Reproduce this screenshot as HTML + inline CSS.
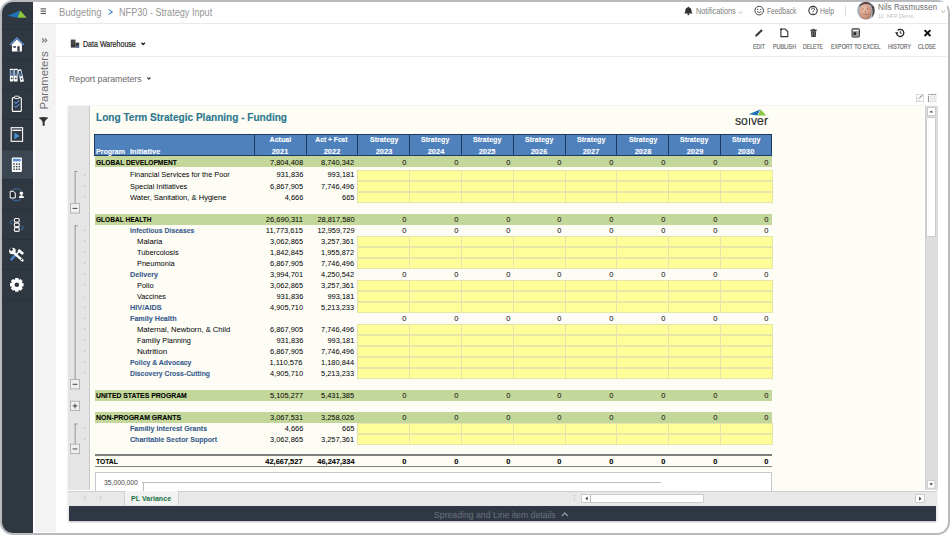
<!DOCTYPE html>
<html><head><meta charset="utf-8"><style>
html,body{margin:0;padding:0;width:950px;height:535px;overflow:hidden;background:#fff}
body{position:relative;font-family:"Liberation Sans", sans-serif}
span{position:absolute;white-space:nowrap;line-height:1;display:block}
</style></head><body>
<div style="position:absolute;left:0;top:0;width:950px;height:535px;box-sizing:border-box;border:2.4px solid #b9babd;border-radius:13px;overflow:hidden;background:#fff">
</div>
<div style="position:absolute;left:2.30px;top:2.20px;width:30.40px;height:530.40px;background:#2f3741;border-radius:11px 0 0 11px"></div>
<div style="position:absolute;left:2.30px;top:149.30px;width:30.40px;height:29.80px;background:#3c4652;"></div>
<div style="position:absolute;left:2.30px;top:29.30px;width:30.40px;height:0.70px;background:#2a313b;"></div>
<div style="position:absolute;left:2.30px;top:59.30px;width:30.40px;height:0.70px;background:#2a313b;"></div>
<div style="position:absolute;left:2.30px;top:89.30px;width:30.40px;height:0.70px;background:#2a313b;"></div>
<div style="position:absolute;left:2.30px;top:119.30px;width:30.40px;height:0.70px;background:#2a313b;"></div>
<div style="position:absolute;left:2.30px;top:149.30px;width:30.40px;height:0.70px;background:#2a313b;"></div>
<div style="position:absolute;left:2.30px;top:179.30px;width:30.40px;height:0.70px;background:#2a313b;"></div>
<div style="position:absolute;left:2.30px;top:209.30px;width:30.40px;height:0.70px;background:#2a313b;"></div>
<div style="position:absolute;left:2.30px;top:239.30px;width:30.40px;height:0.70px;background:#2a313b;"></div>
<div style="position:absolute;left:2.30px;top:269.30px;width:30.40px;height:0.70px;background:#2a313b;"></div>
<div style="position:absolute;left:2.30px;top:299.30px;width:30.40px;height:0.70px;background:#2a313b;"></div>
<div style="position:absolute;left:32.70px;top:2.20px;width:914.30px;height:20.80px;background:#ffffff;"></div>
<div style="position:absolute;left:32.70px;top:22.90px;width:914.30px;height:1.00px;background:#e8e8e8;"></div>
<div style="position:absolute;left:34.60px;top:23.90px;width:21.40px;height:508.00px;background:#f3f3f3;"></div>
<div style="position:absolute;left:56.00px;top:56.20px;width:891.00px;height:0.90px;background:#ededed;"></div>
<div style="position:absolute;left:68.3px;top:106.3px;width:869.2px;height:414.9px;box-shadow:0 0 2px rgba(0,0,0,0.12)"></div>
<div style="position:absolute;left:68.30px;top:106.30px;width:20.70px;height:384.20px;background:#e5e5e5;"></div>
<div style="position:absolute;left:89.00px;top:106.30px;width:1.20px;height:384.20px;background:#c9c9c9;"></div>
<div style="position:absolute;left:90.20px;top:106.30px;width:834.30px;height:384.20px;background:#fdfdf6;"></div>
<div style="position:absolute;left:924.50px;top:106.30px;width:13.00px;height:384.20px;background:#dddddd;"></div>
<div style="position:absolute;left:924.50px;top:106.30px;width:0.80px;height:384.20px;background:#cfcfcf;"></div>
<div style="position:absolute;left:927.50px;top:107.50px;width:7.40px;height:7.20px;background:#ffffff;box-shadow:0 0 0 0.6px #bdbdbd"></div>
<div style="position:absolute;left:927.30px;top:118.40px;width:7.60px;height:118.00px;background:#ffffff;box-shadow:0 0 0 0.6px #bdbdbd"></div>
<div style="position:absolute;left:68.30px;top:490.50px;width:869.20px;height:15.00px;background:#e8e8e8;"></div>
<div style="position:absolute;left:68.30px;top:490.50px;width:869.20px;height:0.80px;background:#d0d0d0;"></div>
<div style="position:absolute;left:124.50px;top:490.90px;width:53.70px;height:14.20px;background:#f3f3f3;box-shadow:0.6px 0 0 #c8c8c8,-0.6px 0 0 #c8c8c8"></div>
<div style="position:absolute;left:582.40px;top:494.80px;width:121.00px;height:7.40px;background:#ffffff;box-shadow:0 0 0 0.6px #b8b8b8"></div>
<div style="position:absolute;left:590.30px;top:494.80px;width:0.60px;height:7.40px;background:#b8b8b8;"></div>
<div style="position:absolute;left:916.00px;top:494.80px;width:8.40px;height:7.60px;background:#ffffff;box-shadow:0 0 0 0.6px #b8b8b8"></div>
<div style="position:absolute;left:68.90px;top:505.60px;width:867.60px;height:15.60px;background:#2f3744;box-shadow:0 1px 2px rgba(0,0,0,0.25)"></div>
<div style="position:absolute;left:94.90px;top:133.90px;width:677.10px;height:22.30px;background:#4f81bd;"></div>
<div style="position:absolute;left:94.4px;top:133.7px;width:677.9px;height:22.6px;box-sizing:border-box;border:1.1px solid #1f3a60"></div>
<div style="position:absolute;left:253.70px;top:133.90px;width:1.10px;height:22.30px;background:#1f3a60;"></div>
<div style="position:absolute;left:305.50px;top:133.90px;width:1.10px;height:22.30px;background:#1f3a60;"></div>
<div style="position:absolute;left:357.30px;top:133.90px;width:1.10px;height:22.30px;background:#1f3a60;"></div>
<div style="position:absolute;left:409.10px;top:133.90px;width:1.10px;height:22.30px;background:#1f3a60;"></div>
<div style="position:absolute;left:460.90px;top:133.90px;width:1.10px;height:22.30px;background:#1f3a60;"></div>
<div style="position:absolute;left:512.70px;top:133.90px;width:1.10px;height:22.30px;background:#1f3a60;"></div>
<div style="position:absolute;left:564.50px;top:133.90px;width:1.10px;height:22.30px;background:#1f3a60;"></div>
<div style="position:absolute;left:616.30px;top:133.90px;width:1.10px;height:22.30px;background:#1f3a60;"></div>
<div style="position:absolute;left:668.10px;top:133.90px;width:1.10px;height:22.30px;background:#1f3a60;"></div>
<div style="position:absolute;left:719.90px;top:133.90px;width:1.10px;height:22.30px;background:#1f3a60;"></div>
<div style="position:absolute;left:94.90px;top:156.20px;width:677.10px;height:10.70px;background:#c4d79b;"></div>
<div style="position:absolute;left:357.80px;top:169.60px;width:414.20px;height:11.00px;background:#ffff99;"></div>
<div style="position:absolute;left:357.80px;top:169.60px;width:414.20px;height:0.70px;background:#e6e6a8;"></div>
<div style="position:absolute;left:357.80px;top:180.25px;width:414.20px;height:0.70px;background:#e6e6a8;"></div>
<div style="position:absolute;left:357.45px;top:169.60px;width:0.70px;height:11.00px;background:#e3e3aa;"></div>
<div style="position:absolute;left:409.25px;top:169.60px;width:0.70px;height:11.00px;background:#e3e3aa;"></div>
<div style="position:absolute;left:461.05px;top:169.60px;width:0.70px;height:11.00px;background:#e3e3aa;"></div>
<div style="position:absolute;left:512.85px;top:169.60px;width:0.70px;height:11.00px;background:#e3e3aa;"></div>
<div style="position:absolute;left:564.65px;top:169.60px;width:0.70px;height:11.00px;background:#e3e3aa;"></div>
<div style="position:absolute;left:616.45px;top:169.60px;width:0.70px;height:11.00px;background:#e3e3aa;"></div>
<div style="position:absolute;left:668.25px;top:169.60px;width:0.70px;height:11.00px;background:#e3e3aa;"></div>
<div style="position:absolute;left:720.05px;top:169.60px;width:0.70px;height:11.00px;background:#e3e3aa;"></div>
<div style="position:absolute;left:771.65px;top:169.60px;width:0.70px;height:11.00px;background:#e3e3aa;"></div>
<div style="position:absolute;left:357.80px;top:180.60px;width:414.20px;height:11.00px;background:#ffff99;"></div>
<div style="position:absolute;left:357.80px;top:180.60px;width:414.20px;height:0.70px;background:#e6e6a8;"></div>
<div style="position:absolute;left:357.80px;top:191.25px;width:414.20px;height:0.70px;background:#e6e6a8;"></div>
<div style="position:absolute;left:357.45px;top:180.60px;width:0.70px;height:11.00px;background:#e3e3aa;"></div>
<div style="position:absolute;left:409.25px;top:180.60px;width:0.70px;height:11.00px;background:#e3e3aa;"></div>
<div style="position:absolute;left:461.05px;top:180.60px;width:0.70px;height:11.00px;background:#e3e3aa;"></div>
<div style="position:absolute;left:512.85px;top:180.60px;width:0.70px;height:11.00px;background:#e3e3aa;"></div>
<div style="position:absolute;left:564.65px;top:180.60px;width:0.70px;height:11.00px;background:#e3e3aa;"></div>
<div style="position:absolute;left:616.45px;top:180.60px;width:0.70px;height:11.00px;background:#e3e3aa;"></div>
<div style="position:absolute;left:668.25px;top:180.60px;width:0.70px;height:11.00px;background:#e3e3aa;"></div>
<div style="position:absolute;left:720.05px;top:180.60px;width:0.70px;height:11.00px;background:#e3e3aa;"></div>
<div style="position:absolute;left:771.65px;top:180.60px;width:0.70px;height:11.00px;background:#e3e3aa;"></div>
<div style="position:absolute;left:357.80px;top:191.60px;width:414.20px;height:11.00px;background:#ffff99;"></div>
<div style="position:absolute;left:357.80px;top:191.60px;width:414.20px;height:0.70px;background:#e6e6a8;"></div>
<div style="position:absolute;left:357.80px;top:202.25px;width:414.20px;height:0.70px;background:#e6e6a8;"></div>
<div style="position:absolute;left:357.45px;top:191.60px;width:0.70px;height:11.00px;background:#e3e3aa;"></div>
<div style="position:absolute;left:409.25px;top:191.60px;width:0.70px;height:11.00px;background:#e3e3aa;"></div>
<div style="position:absolute;left:461.05px;top:191.60px;width:0.70px;height:11.00px;background:#e3e3aa;"></div>
<div style="position:absolute;left:512.85px;top:191.60px;width:0.70px;height:11.00px;background:#e3e3aa;"></div>
<div style="position:absolute;left:564.65px;top:191.60px;width:0.70px;height:11.00px;background:#e3e3aa;"></div>
<div style="position:absolute;left:616.45px;top:191.60px;width:0.70px;height:11.00px;background:#e3e3aa;"></div>
<div style="position:absolute;left:668.25px;top:191.60px;width:0.70px;height:11.00px;background:#e3e3aa;"></div>
<div style="position:absolute;left:720.05px;top:191.60px;width:0.70px;height:11.00px;background:#e3e3aa;"></div>
<div style="position:absolute;left:771.65px;top:191.60px;width:0.70px;height:11.00px;background:#e3e3aa;"></div>
<div style="position:absolute;left:94.90px;top:213.60px;width:677.10px;height:11.00px;background:#c4d79b;"></div>
<div style="position:absolute;left:357.80px;top:235.60px;width:414.20px;height:11.00px;background:#ffff99;"></div>
<div style="position:absolute;left:357.80px;top:235.60px;width:414.20px;height:0.70px;background:#e6e6a8;"></div>
<div style="position:absolute;left:357.80px;top:246.25px;width:414.20px;height:0.70px;background:#e6e6a8;"></div>
<div style="position:absolute;left:357.45px;top:235.60px;width:0.70px;height:11.00px;background:#e3e3aa;"></div>
<div style="position:absolute;left:409.25px;top:235.60px;width:0.70px;height:11.00px;background:#e3e3aa;"></div>
<div style="position:absolute;left:461.05px;top:235.60px;width:0.70px;height:11.00px;background:#e3e3aa;"></div>
<div style="position:absolute;left:512.85px;top:235.60px;width:0.70px;height:11.00px;background:#e3e3aa;"></div>
<div style="position:absolute;left:564.65px;top:235.60px;width:0.70px;height:11.00px;background:#e3e3aa;"></div>
<div style="position:absolute;left:616.45px;top:235.60px;width:0.70px;height:11.00px;background:#e3e3aa;"></div>
<div style="position:absolute;left:668.25px;top:235.60px;width:0.70px;height:11.00px;background:#e3e3aa;"></div>
<div style="position:absolute;left:720.05px;top:235.60px;width:0.70px;height:11.00px;background:#e3e3aa;"></div>
<div style="position:absolute;left:771.65px;top:235.60px;width:0.70px;height:11.00px;background:#e3e3aa;"></div>
<div style="position:absolute;left:357.80px;top:246.60px;width:414.20px;height:11.00px;background:#ffff99;"></div>
<div style="position:absolute;left:357.80px;top:246.60px;width:414.20px;height:0.70px;background:#e6e6a8;"></div>
<div style="position:absolute;left:357.80px;top:257.25px;width:414.20px;height:0.70px;background:#e6e6a8;"></div>
<div style="position:absolute;left:357.45px;top:246.60px;width:0.70px;height:11.00px;background:#e3e3aa;"></div>
<div style="position:absolute;left:409.25px;top:246.60px;width:0.70px;height:11.00px;background:#e3e3aa;"></div>
<div style="position:absolute;left:461.05px;top:246.60px;width:0.70px;height:11.00px;background:#e3e3aa;"></div>
<div style="position:absolute;left:512.85px;top:246.60px;width:0.70px;height:11.00px;background:#e3e3aa;"></div>
<div style="position:absolute;left:564.65px;top:246.60px;width:0.70px;height:11.00px;background:#e3e3aa;"></div>
<div style="position:absolute;left:616.45px;top:246.60px;width:0.70px;height:11.00px;background:#e3e3aa;"></div>
<div style="position:absolute;left:668.25px;top:246.60px;width:0.70px;height:11.00px;background:#e3e3aa;"></div>
<div style="position:absolute;left:720.05px;top:246.60px;width:0.70px;height:11.00px;background:#e3e3aa;"></div>
<div style="position:absolute;left:771.65px;top:246.60px;width:0.70px;height:11.00px;background:#e3e3aa;"></div>
<div style="position:absolute;left:357.80px;top:257.60px;width:414.20px;height:11.00px;background:#ffff99;"></div>
<div style="position:absolute;left:357.80px;top:257.60px;width:414.20px;height:0.70px;background:#e6e6a8;"></div>
<div style="position:absolute;left:357.80px;top:268.25px;width:414.20px;height:0.70px;background:#e6e6a8;"></div>
<div style="position:absolute;left:357.45px;top:257.60px;width:0.70px;height:11.00px;background:#e3e3aa;"></div>
<div style="position:absolute;left:409.25px;top:257.60px;width:0.70px;height:11.00px;background:#e3e3aa;"></div>
<div style="position:absolute;left:461.05px;top:257.60px;width:0.70px;height:11.00px;background:#e3e3aa;"></div>
<div style="position:absolute;left:512.85px;top:257.60px;width:0.70px;height:11.00px;background:#e3e3aa;"></div>
<div style="position:absolute;left:564.65px;top:257.60px;width:0.70px;height:11.00px;background:#e3e3aa;"></div>
<div style="position:absolute;left:616.45px;top:257.60px;width:0.70px;height:11.00px;background:#e3e3aa;"></div>
<div style="position:absolute;left:668.25px;top:257.60px;width:0.70px;height:11.00px;background:#e3e3aa;"></div>
<div style="position:absolute;left:720.05px;top:257.60px;width:0.70px;height:11.00px;background:#e3e3aa;"></div>
<div style="position:absolute;left:771.65px;top:257.60px;width:0.70px;height:11.00px;background:#e3e3aa;"></div>
<div style="position:absolute;left:357.80px;top:279.60px;width:414.20px;height:11.00px;background:#ffff99;"></div>
<div style="position:absolute;left:357.80px;top:279.60px;width:414.20px;height:0.70px;background:#e6e6a8;"></div>
<div style="position:absolute;left:357.80px;top:290.25px;width:414.20px;height:0.70px;background:#e6e6a8;"></div>
<div style="position:absolute;left:357.45px;top:279.60px;width:0.70px;height:11.00px;background:#e3e3aa;"></div>
<div style="position:absolute;left:409.25px;top:279.60px;width:0.70px;height:11.00px;background:#e3e3aa;"></div>
<div style="position:absolute;left:461.05px;top:279.60px;width:0.70px;height:11.00px;background:#e3e3aa;"></div>
<div style="position:absolute;left:512.85px;top:279.60px;width:0.70px;height:11.00px;background:#e3e3aa;"></div>
<div style="position:absolute;left:564.65px;top:279.60px;width:0.70px;height:11.00px;background:#e3e3aa;"></div>
<div style="position:absolute;left:616.45px;top:279.60px;width:0.70px;height:11.00px;background:#e3e3aa;"></div>
<div style="position:absolute;left:668.25px;top:279.60px;width:0.70px;height:11.00px;background:#e3e3aa;"></div>
<div style="position:absolute;left:720.05px;top:279.60px;width:0.70px;height:11.00px;background:#e3e3aa;"></div>
<div style="position:absolute;left:771.65px;top:279.60px;width:0.70px;height:11.00px;background:#e3e3aa;"></div>
<div style="position:absolute;left:357.80px;top:290.60px;width:414.20px;height:11.00px;background:#ffff99;"></div>
<div style="position:absolute;left:357.80px;top:290.60px;width:414.20px;height:0.70px;background:#e6e6a8;"></div>
<div style="position:absolute;left:357.80px;top:301.25px;width:414.20px;height:0.70px;background:#e6e6a8;"></div>
<div style="position:absolute;left:357.45px;top:290.60px;width:0.70px;height:11.00px;background:#e3e3aa;"></div>
<div style="position:absolute;left:409.25px;top:290.60px;width:0.70px;height:11.00px;background:#e3e3aa;"></div>
<div style="position:absolute;left:461.05px;top:290.60px;width:0.70px;height:11.00px;background:#e3e3aa;"></div>
<div style="position:absolute;left:512.85px;top:290.60px;width:0.70px;height:11.00px;background:#e3e3aa;"></div>
<div style="position:absolute;left:564.65px;top:290.60px;width:0.70px;height:11.00px;background:#e3e3aa;"></div>
<div style="position:absolute;left:616.45px;top:290.60px;width:0.70px;height:11.00px;background:#e3e3aa;"></div>
<div style="position:absolute;left:668.25px;top:290.60px;width:0.70px;height:11.00px;background:#e3e3aa;"></div>
<div style="position:absolute;left:720.05px;top:290.60px;width:0.70px;height:11.00px;background:#e3e3aa;"></div>
<div style="position:absolute;left:771.65px;top:290.60px;width:0.70px;height:11.00px;background:#e3e3aa;"></div>
<div style="position:absolute;left:357.80px;top:301.60px;width:414.20px;height:11.00px;background:#ffff99;"></div>
<div style="position:absolute;left:357.80px;top:301.60px;width:414.20px;height:0.70px;background:#e6e6a8;"></div>
<div style="position:absolute;left:357.80px;top:312.25px;width:414.20px;height:0.70px;background:#e6e6a8;"></div>
<div style="position:absolute;left:357.45px;top:301.60px;width:0.70px;height:11.00px;background:#e3e3aa;"></div>
<div style="position:absolute;left:409.25px;top:301.60px;width:0.70px;height:11.00px;background:#e3e3aa;"></div>
<div style="position:absolute;left:461.05px;top:301.60px;width:0.70px;height:11.00px;background:#e3e3aa;"></div>
<div style="position:absolute;left:512.85px;top:301.60px;width:0.70px;height:11.00px;background:#e3e3aa;"></div>
<div style="position:absolute;left:564.65px;top:301.60px;width:0.70px;height:11.00px;background:#e3e3aa;"></div>
<div style="position:absolute;left:616.45px;top:301.60px;width:0.70px;height:11.00px;background:#e3e3aa;"></div>
<div style="position:absolute;left:668.25px;top:301.60px;width:0.70px;height:11.00px;background:#e3e3aa;"></div>
<div style="position:absolute;left:720.05px;top:301.60px;width:0.70px;height:11.00px;background:#e3e3aa;"></div>
<div style="position:absolute;left:771.65px;top:301.60px;width:0.70px;height:11.00px;background:#e3e3aa;"></div>
<div style="position:absolute;left:357.80px;top:323.60px;width:414.20px;height:11.00px;background:#ffff99;"></div>
<div style="position:absolute;left:357.80px;top:323.60px;width:414.20px;height:0.70px;background:#e6e6a8;"></div>
<div style="position:absolute;left:357.80px;top:334.25px;width:414.20px;height:0.70px;background:#e6e6a8;"></div>
<div style="position:absolute;left:357.45px;top:323.60px;width:0.70px;height:11.00px;background:#e3e3aa;"></div>
<div style="position:absolute;left:409.25px;top:323.60px;width:0.70px;height:11.00px;background:#e3e3aa;"></div>
<div style="position:absolute;left:461.05px;top:323.60px;width:0.70px;height:11.00px;background:#e3e3aa;"></div>
<div style="position:absolute;left:512.85px;top:323.60px;width:0.70px;height:11.00px;background:#e3e3aa;"></div>
<div style="position:absolute;left:564.65px;top:323.60px;width:0.70px;height:11.00px;background:#e3e3aa;"></div>
<div style="position:absolute;left:616.45px;top:323.60px;width:0.70px;height:11.00px;background:#e3e3aa;"></div>
<div style="position:absolute;left:668.25px;top:323.60px;width:0.70px;height:11.00px;background:#e3e3aa;"></div>
<div style="position:absolute;left:720.05px;top:323.60px;width:0.70px;height:11.00px;background:#e3e3aa;"></div>
<div style="position:absolute;left:771.65px;top:323.60px;width:0.70px;height:11.00px;background:#e3e3aa;"></div>
<div style="position:absolute;left:357.80px;top:334.60px;width:414.20px;height:11.00px;background:#ffff99;"></div>
<div style="position:absolute;left:357.80px;top:334.60px;width:414.20px;height:0.70px;background:#e6e6a8;"></div>
<div style="position:absolute;left:357.80px;top:345.25px;width:414.20px;height:0.70px;background:#e6e6a8;"></div>
<div style="position:absolute;left:357.45px;top:334.60px;width:0.70px;height:11.00px;background:#e3e3aa;"></div>
<div style="position:absolute;left:409.25px;top:334.60px;width:0.70px;height:11.00px;background:#e3e3aa;"></div>
<div style="position:absolute;left:461.05px;top:334.60px;width:0.70px;height:11.00px;background:#e3e3aa;"></div>
<div style="position:absolute;left:512.85px;top:334.60px;width:0.70px;height:11.00px;background:#e3e3aa;"></div>
<div style="position:absolute;left:564.65px;top:334.60px;width:0.70px;height:11.00px;background:#e3e3aa;"></div>
<div style="position:absolute;left:616.45px;top:334.60px;width:0.70px;height:11.00px;background:#e3e3aa;"></div>
<div style="position:absolute;left:668.25px;top:334.60px;width:0.70px;height:11.00px;background:#e3e3aa;"></div>
<div style="position:absolute;left:720.05px;top:334.60px;width:0.70px;height:11.00px;background:#e3e3aa;"></div>
<div style="position:absolute;left:771.65px;top:334.60px;width:0.70px;height:11.00px;background:#e3e3aa;"></div>
<div style="position:absolute;left:357.80px;top:345.60px;width:414.20px;height:11.00px;background:#ffff99;"></div>
<div style="position:absolute;left:357.80px;top:345.60px;width:414.20px;height:0.70px;background:#e6e6a8;"></div>
<div style="position:absolute;left:357.80px;top:356.25px;width:414.20px;height:0.70px;background:#e6e6a8;"></div>
<div style="position:absolute;left:357.45px;top:345.60px;width:0.70px;height:11.00px;background:#e3e3aa;"></div>
<div style="position:absolute;left:409.25px;top:345.60px;width:0.70px;height:11.00px;background:#e3e3aa;"></div>
<div style="position:absolute;left:461.05px;top:345.60px;width:0.70px;height:11.00px;background:#e3e3aa;"></div>
<div style="position:absolute;left:512.85px;top:345.60px;width:0.70px;height:11.00px;background:#e3e3aa;"></div>
<div style="position:absolute;left:564.65px;top:345.60px;width:0.70px;height:11.00px;background:#e3e3aa;"></div>
<div style="position:absolute;left:616.45px;top:345.60px;width:0.70px;height:11.00px;background:#e3e3aa;"></div>
<div style="position:absolute;left:668.25px;top:345.60px;width:0.70px;height:11.00px;background:#e3e3aa;"></div>
<div style="position:absolute;left:720.05px;top:345.60px;width:0.70px;height:11.00px;background:#e3e3aa;"></div>
<div style="position:absolute;left:771.65px;top:345.60px;width:0.70px;height:11.00px;background:#e3e3aa;"></div>
<div style="position:absolute;left:357.80px;top:356.60px;width:414.20px;height:11.00px;background:#ffff99;"></div>
<div style="position:absolute;left:357.80px;top:356.60px;width:414.20px;height:0.70px;background:#e6e6a8;"></div>
<div style="position:absolute;left:357.80px;top:367.25px;width:414.20px;height:0.70px;background:#e6e6a8;"></div>
<div style="position:absolute;left:357.45px;top:356.60px;width:0.70px;height:11.00px;background:#e3e3aa;"></div>
<div style="position:absolute;left:409.25px;top:356.60px;width:0.70px;height:11.00px;background:#e3e3aa;"></div>
<div style="position:absolute;left:461.05px;top:356.60px;width:0.70px;height:11.00px;background:#e3e3aa;"></div>
<div style="position:absolute;left:512.85px;top:356.60px;width:0.70px;height:11.00px;background:#e3e3aa;"></div>
<div style="position:absolute;left:564.65px;top:356.60px;width:0.70px;height:11.00px;background:#e3e3aa;"></div>
<div style="position:absolute;left:616.45px;top:356.60px;width:0.70px;height:11.00px;background:#e3e3aa;"></div>
<div style="position:absolute;left:668.25px;top:356.60px;width:0.70px;height:11.00px;background:#e3e3aa;"></div>
<div style="position:absolute;left:720.05px;top:356.60px;width:0.70px;height:11.00px;background:#e3e3aa;"></div>
<div style="position:absolute;left:771.65px;top:356.60px;width:0.70px;height:11.00px;background:#e3e3aa;"></div>
<div style="position:absolute;left:357.80px;top:367.60px;width:414.20px;height:11.00px;background:#ffff99;"></div>
<div style="position:absolute;left:357.80px;top:367.60px;width:414.20px;height:0.70px;background:#e6e6a8;"></div>
<div style="position:absolute;left:357.80px;top:378.25px;width:414.20px;height:0.70px;background:#e6e6a8;"></div>
<div style="position:absolute;left:357.45px;top:367.60px;width:0.70px;height:11.00px;background:#e3e3aa;"></div>
<div style="position:absolute;left:409.25px;top:367.60px;width:0.70px;height:11.00px;background:#e3e3aa;"></div>
<div style="position:absolute;left:461.05px;top:367.60px;width:0.70px;height:11.00px;background:#e3e3aa;"></div>
<div style="position:absolute;left:512.85px;top:367.60px;width:0.70px;height:11.00px;background:#e3e3aa;"></div>
<div style="position:absolute;left:564.65px;top:367.60px;width:0.70px;height:11.00px;background:#e3e3aa;"></div>
<div style="position:absolute;left:616.45px;top:367.60px;width:0.70px;height:11.00px;background:#e3e3aa;"></div>
<div style="position:absolute;left:668.25px;top:367.60px;width:0.70px;height:11.00px;background:#e3e3aa;"></div>
<div style="position:absolute;left:720.05px;top:367.60px;width:0.70px;height:11.00px;background:#e3e3aa;"></div>
<div style="position:absolute;left:771.65px;top:367.60px;width:0.70px;height:11.00px;background:#e3e3aa;"></div>
<div style="position:absolute;left:94.90px;top:389.60px;width:677.10px;height:11.00px;background:#c4d79b;"></div>
<div style="position:absolute;left:94.90px;top:411.60px;width:677.10px;height:11.00px;background:#c4d79b;"></div>
<div style="position:absolute;left:357.80px;top:422.60px;width:414.20px;height:11.00px;background:#ffff99;"></div>
<div style="position:absolute;left:357.80px;top:422.60px;width:414.20px;height:0.70px;background:#e6e6a8;"></div>
<div style="position:absolute;left:357.80px;top:433.25px;width:414.20px;height:0.70px;background:#e6e6a8;"></div>
<div style="position:absolute;left:357.45px;top:422.60px;width:0.70px;height:11.00px;background:#e3e3aa;"></div>
<div style="position:absolute;left:409.25px;top:422.60px;width:0.70px;height:11.00px;background:#e3e3aa;"></div>
<div style="position:absolute;left:461.05px;top:422.60px;width:0.70px;height:11.00px;background:#e3e3aa;"></div>
<div style="position:absolute;left:512.85px;top:422.60px;width:0.70px;height:11.00px;background:#e3e3aa;"></div>
<div style="position:absolute;left:564.65px;top:422.60px;width:0.70px;height:11.00px;background:#e3e3aa;"></div>
<div style="position:absolute;left:616.45px;top:422.60px;width:0.70px;height:11.00px;background:#e3e3aa;"></div>
<div style="position:absolute;left:668.25px;top:422.60px;width:0.70px;height:11.00px;background:#e3e3aa;"></div>
<div style="position:absolute;left:720.05px;top:422.60px;width:0.70px;height:11.00px;background:#e3e3aa;"></div>
<div style="position:absolute;left:771.65px;top:422.60px;width:0.70px;height:11.00px;background:#e3e3aa;"></div>
<div style="position:absolute;left:357.80px;top:433.60px;width:414.20px;height:11.00px;background:#ffff99;"></div>
<div style="position:absolute;left:357.80px;top:433.60px;width:414.20px;height:0.70px;background:#e6e6a8;"></div>
<div style="position:absolute;left:357.80px;top:444.25px;width:414.20px;height:0.70px;background:#e6e6a8;"></div>
<div style="position:absolute;left:357.45px;top:433.60px;width:0.70px;height:11.00px;background:#e3e3aa;"></div>
<div style="position:absolute;left:409.25px;top:433.60px;width:0.70px;height:11.00px;background:#e3e3aa;"></div>
<div style="position:absolute;left:461.05px;top:433.60px;width:0.70px;height:11.00px;background:#e3e3aa;"></div>
<div style="position:absolute;left:512.85px;top:433.60px;width:0.70px;height:11.00px;background:#e3e3aa;"></div>
<div style="position:absolute;left:564.65px;top:433.60px;width:0.70px;height:11.00px;background:#e3e3aa;"></div>
<div style="position:absolute;left:616.45px;top:433.60px;width:0.70px;height:11.00px;background:#e3e3aa;"></div>
<div style="position:absolute;left:668.25px;top:433.60px;width:0.70px;height:11.00px;background:#e3e3aa;"></div>
<div style="position:absolute;left:720.05px;top:433.60px;width:0.70px;height:11.00px;background:#e3e3aa;"></div>
<div style="position:absolute;left:771.65px;top:433.60px;width:0.70px;height:11.00px;background:#e3e3aa;"></div>
<div style="position:absolute;left:94.90px;top:454.40px;width:677.10px;height:1.40px;background:#7f7f7f;"></div>
<div style="position:absolute;left:94.90px;top:465.90px;width:677.10px;height:1.40px;background:#7f7f7f;"></div>
<div style="position:absolute;left:94.6px;top:472.2px;width:677.4px;height:30px;box-sizing:border-box;border:1px solid #c8c8c8;background:#fff"></div>
<div style="position:absolute;left:141.50px;top:482.20px;width:519.50px;height:0.80px;background:#bdbdbd;"></div>
<div style="position:absolute;left:143.40px;top:482.20px;width:0.80px;height:8.50px;background:#bdbdbd;"></div>
<div style="position:absolute;left:68.30px;top:490.50px;width:869.20px;height:15.00px;background:#e8e8e8;"></div>
<div style="position:absolute;left:68.30px;top:490.50px;width:869.20px;height:0.80px;background:#d0d0d0;"></div>
<div style="position:absolute;left:124.50px;top:490.90px;width:53.70px;height:14.60px;background:#f2f2f2;box-shadow:0.7px 0 0 #c8c8c8,-0.7px 0 0 #c8c8c8"></div>
<div style="position:absolute;left:582.40px;top:494.80px;width:121.00px;height:7.40px;background:#ffffff;box-shadow:0 0 0 0.6px #b8b8b8"></div>
<div style="position:absolute;left:590.30px;top:494.80px;width:0.60px;height:7.40px;background:#b8b8b8;"></div>
<div style="position:absolute;left:916.00px;top:494.80px;width:8.40px;height:7.60px;background:#ffffff;box-shadow:0 0 0 0.6px #b8b8b8"></div>
<div style="position:absolute;left:748.90px;top:117.90px;width:1.40px;height:6.90px;background:#2e2e2e;"></div>
<span style="left:95.80px;top:159.00px;font-size:8.1px;color:#000;font-weight:bold;transform:scaleX(0.8255);transform-origin:left 0;-webkit-text-stroke:0.1px #000;">GLOBAL DEVELOPMENT</span>
<span style="left:266.79px;top:159.00px;font-size:8.1px;color:#000;font-weight:normal;transform:scaleX(0.9160);transform-origin:right 0;">7,804,408</span>
<span style="left:318.39px;top:159.00px;font-size:8.1px;color:#000;font-weight:normal;transform:scaleX(0.9160);transform-origin:right 0;">8,740,342</span>
<span style="left:401.90px;top:159.00px;font-size:8.1px;color:#000;font-weight:normal;transform:scaleX(0.9177);transform-origin:right 0;">0</span>
<span style="left:453.70px;top:159.00px;font-size:8.1px;color:#000;font-weight:normal;transform:scaleX(0.9177);transform-origin:right 0;">0</span>
<span style="left:505.50px;top:159.00px;font-size:8.1px;color:#000;font-weight:normal;transform:scaleX(0.9177);transform-origin:right 0;">0</span>
<span style="left:557.30px;top:159.00px;font-size:8.1px;color:#000;font-weight:normal;transform:scaleX(0.9177);transform-origin:right 0;">0</span>
<span style="left:609.10px;top:159.00px;font-size:8.1px;color:#000;font-weight:normal;transform:scaleX(0.9177);transform-origin:right 0;">0</span>
<span style="left:660.90px;top:159.00px;font-size:8.1px;color:#000;font-weight:normal;transform:scaleX(0.9177);transform-origin:right 0;">0</span>
<span style="left:712.70px;top:159.00px;font-size:8.1px;color:#000;font-weight:normal;transform:scaleX(0.9177);transform-origin:right 0;">0</span>
<span style="left:764.30px;top:159.00px;font-size:8.1px;color:#000;font-weight:normal;transform:scaleX(0.9177);transform-origin:right 0;">0</span>
<span style="left:130.30px;top:171.00px;font-size:8.1px;color:#000;font-weight:normal;transform:scaleX(0.9052);transform-origin:left 0;">Financial Services for the Poor</span>
<span style="left:273.54px;top:171.00px;font-size:8.1px;color:#000;font-weight:normal;transform:scaleX(0.9166);transform-origin:right 0;">931,836</span>
<span style="left:325.14px;top:171.00px;font-size:8.1px;color:#000;font-weight:normal;transform:scaleX(0.9166);transform-origin:right 0;">993,181</span>
<span style="left:130.30px;top:183.00px;font-size:8.1px;color:#000;font-weight:normal;transform:scaleX(0.9155);transform-origin:left 0;">Special Initiatives</span>
<span style="left:266.79px;top:183.00px;font-size:8.1px;color:#000;font-weight:normal;transform:scaleX(0.9160);transform-origin:right 0;">6,867,905</span>
<span style="left:318.39px;top:183.00px;font-size:8.1px;color:#000;font-weight:normal;transform:scaleX(0.9160);transform-origin:right 0;">7,746,496</span>
<span style="left:130.30px;top:194.00px;font-size:8.1px;color:#000;font-weight:normal;transform:scaleX(0.9345);transform-origin:left 0;">Water, Sanitation, &amp; Hygiene</span>
<span style="left:282.55px;top:194.00px;font-size:8.1px;color:#000;font-weight:normal;transform:scaleX(0.9162);transform-origin:right 0;">4,666</span>
<span style="left:340.90px;top:194.00px;font-size:8.1px;color:#000;font-weight:normal;transform:scaleX(0.9177);transform-origin:right 0;">665</span>
<span style="left:95.80px;top:216.00px;font-size:8.1px;color:#000;font-weight:bold;transform:scaleX(0.8115);transform-origin:left 0;-webkit-text-stroke:0.1px #000;">GLOBAL HEALTH</span>
<span style="left:262.89px;top:216.00px;font-size:8.1px;color:#000;font-weight:normal;transform:scaleX(0.9300);transform-origin:right 0;">26,690,311</span>
<span style="left:313.89px;top:216.00px;font-size:8.1px;color:#000;font-weight:normal;transform:scaleX(0.9162);transform-origin:right 0;">28,817,580</span>
<span style="left:401.90px;top:216.00px;font-size:8.1px;color:#000;font-weight:normal;transform:scaleX(0.9177);transform-origin:right 0;">0</span>
<span style="left:453.70px;top:216.00px;font-size:8.1px;color:#000;font-weight:normal;transform:scaleX(0.9177);transform-origin:right 0;">0</span>
<span style="left:505.50px;top:216.00px;font-size:8.1px;color:#000;font-weight:normal;transform:scaleX(0.9177);transform-origin:right 0;">0</span>
<span style="left:557.30px;top:216.00px;font-size:8.1px;color:#000;font-weight:normal;transform:scaleX(0.9177);transform-origin:right 0;">0</span>
<span style="left:609.10px;top:216.00px;font-size:8.1px;color:#000;font-weight:normal;transform:scaleX(0.9177);transform-origin:right 0;">0</span>
<span style="left:660.90px;top:216.00px;font-size:8.1px;color:#000;font-weight:normal;transform:scaleX(0.9177);transform-origin:right 0;">0</span>
<span style="left:712.70px;top:216.00px;font-size:8.1px;color:#000;font-weight:normal;transform:scaleX(0.9177);transform-origin:right 0;">0</span>
<span style="left:764.30px;top:216.00px;font-size:8.1px;color:#000;font-weight:normal;transform:scaleX(0.9177);transform-origin:right 0;">0</span>
<span style="left:130.30px;top:227.00px;font-size:8.1px;color:#385b8c;font-weight:bold;transform:scaleX(0.8526);transform-origin:left 0;-webkit-text-stroke:0.1px #385b8c;">Infectious Diseases</span>
<span style="left:262.89px;top:227.00px;font-size:8.1px;color:#000;font-weight:normal;transform:scaleX(0.9300);transform-origin:right 0;">11,773,615</span>
<span style="left:313.89px;top:227.00px;font-size:8.1px;color:#000;font-weight:normal;transform:scaleX(0.9162);transform-origin:right 0;">12,959,729</span>
<span style="left:401.90px;top:227.00px;font-size:8.1px;color:#000;font-weight:normal;transform:scaleX(0.9177);transform-origin:right 0;">0</span>
<span style="left:453.70px;top:227.00px;font-size:8.1px;color:#000;font-weight:normal;transform:scaleX(0.9177);transform-origin:right 0;">0</span>
<span style="left:505.50px;top:227.00px;font-size:8.1px;color:#000;font-weight:normal;transform:scaleX(0.9177);transform-origin:right 0;">0</span>
<span style="left:557.30px;top:227.00px;font-size:8.1px;color:#000;font-weight:normal;transform:scaleX(0.9177);transform-origin:right 0;">0</span>
<span style="left:609.10px;top:227.00px;font-size:8.1px;color:#000;font-weight:normal;transform:scaleX(0.9177);transform-origin:right 0;">0</span>
<span style="left:660.90px;top:227.00px;font-size:8.1px;color:#000;font-weight:normal;transform:scaleX(0.9177);transform-origin:right 0;">0</span>
<span style="left:712.70px;top:227.00px;font-size:8.1px;color:#000;font-weight:normal;transform:scaleX(0.9177);transform-origin:right 0;">0</span>
<span style="left:764.30px;top:227.00px;font-size:8.1px;color:#000;font-weight:normal;transform:scaleX(0.9177);transform-origin:right 0;">0</span>
<span style="left:137.40px;top:238.00px;font-size:8.1px;color:#000;font-weight:normal;transform:scaleX(0.9519);transform-origin:left 0;">Malaria</span>
<span style="left:266.79px;top:238.00px;font-size:8.1px;color:#000;font-weight:normal;transform:scaleX(0.9160);transform-origin:right 0;">3,062,865</span>
<span style="left:318.39px;top:238.00px;font-size:8.1px;color:#000;font-weight:normal;transform:scaleX(0.9160);transform-origin:right 0;">3,257,361</span>
<span style="left:137.40px;top:249.00px;font-size:8.1px;color:#000;font-weight:normal;transform:scaleX(0.9124);transform-origin:left 0;">Tubercolosis</span>
<span style="left:266.79px;top:249.00px;font-size:8.1px;color:#000;font-weight:normal;transform:scaleX(0.9160);transform-origin:right 0;">1,842,845</span>
<span style="left:318.39px;top:249.00px;font-size:8.1px;color:#000;font-weight:normal;transform:scaleX(0.9160);transform-origin:right 0;">1,955,872</span>
<span style="left:137.40px;top:260.00px;font-size:8.1px;color:#000;font-weight:normal;transform:scaleX(0.9206);transform-origin:left 0;">Pneumonia</span>
<span style="left:266.79px;top:260.00px;font-size:8.1px;color:#000;font-weight:normal;transform:scaleX(0.9160);transform-origin:right 0;">6,867,905</span>
<span style="left:318.39px;top:260.00px;font-size:8.1px;color:#000;font-weight:normal;transform:scaleX(0.9160);transform-origin:right 0;">7,746,496</span>
<span style="left:130.30px;top:271.00px;font-size:8.1px;color:#385b8c;font-weight:bold;transform:scaleX(0.8910);transform-origin:left 0;-webkit-text-stroke:0.1px #385b8c;">Delivery</span>
<span style="left:266.79px;top:271.00px;font-size:8.1px;color:#000;font-weight:normal;transform:scaleX(0.9160);transform-origin:right 0;">3,994,701</span>
<span style="left:318.39px;top:271.00px;font-size:8.1px;color:#000;font-weight:normal;transform:scaleX(0.9160);transform-origin:right 0;">4,250,542</span>
<span style="left:401.90px;top:271.00px;font-size:8.1px;color:#000;font-weight:normal;transform:scaleX(0.9177);transform-origin:right 0;">0</span>
<span style="left:453.70px;top:271.00px;font-size:8.1px;color:#000;font-weight:normal;transform:scaleX(0.9177);transform-origin:right 0;">0</span>
<span style="left:505.50px;top:271.00px;font-size:8.1px;color:#000;font-weight:normal;transform:scaleX(0.9177);transform-origin:right 0;">0</span>
<span style="left:557.30px;top:271.00px;font-size:8.1px;color:#000;font-weight:normal;transform:scaleX(0.9177);transform-origin:right 0;">0</span>
<span style="left:609.10px;top:271.00px;font-size:8.1px;color:#000;font-weight:normal;transform:scaleX(0.9177);transform-origin:right 0;">0</span>
<span style="left:660.90px;top:271.00px;font-size:8.1px;color:#000;font-weight:normal;transform:scaleX(0.9177);transform-origin:right 0;">0</span>
<span style="left:712.70px;top:271.00px;font-size:8.1px;color:#000;font-weight:normal;transform:scaleX(0.9177);transform-origin:right 0;">0</span>
<span style="left:764.30px;top:271.00px;font-size:8.1px;color:#000;font-weight:normal;transform:scaleX(0.9177);transform-origin:right 0;">0</span>
<span style="left:137.40px;top:282.00px;font-size:8.1px;color:#000;font-weight:normal;transform:scaleX(0.9194);transform-origin:left 0;">Polio</span>
<span style="left:266.79px;top:282.00px;font-size:8.1px;color:#000;font-weight:normal;transform:scaleX(0.9160);transform-origin:right 0;">3,062,865</span>
<span style="left:318.39px;top:282.00px;font-size:8.1px;color:#000;font-weight:normal;transform:scaleX(0.9160);transform-origin:right 0;">3,257,361</span>
<span style="left:137.40px;top:293.00px;font-size:8.1px;color:#000;font-weight:normal;transform:scaleX(0.8938);transform-origin:left 0;">Vaccines</span>
<span style="left:273.54px;top:293.00px;font-size:8.1px;color:#000;font-weight:normal;transform:scaleX(0.9166);transform-origin:right 0;">931,836</span>
<span style="left:325.14px;top:293.00px;font-size:8.1px;color:#000;font-weight:normal;transform:scaleX(0.9166);transform-origin:right 0;">993,181</span>
<span style="left:130.30px;top:304.00px;font-size:8.1px;color:#385b8c;font-weight:bold;transform:scaleX(0.9027);transform-origin:left 0;-webkit-text-stroke:0.1px #385b8c;">HIV/AIDS</span>
<span style="left:266.79px;top:304.00px;font-size:8.1px;color:#000;font-weight:normal;transform:scaleX(0.9160);transform-origin:right 0;">4,905,710</span>
<span style="left:318.39px;top:304.00px;font-size:8.1px;color:#000;font-weight:normal;transform:scaleX(0.9160);transform-origin:right 0;">5,213,233</span>
<span style="left:130.30px;top:315.00px;font-size:8.1px;color:#385b8c;font-weight:bold;transform:scaleX(0.8857);transform-origin:left 0;-webkit-text-stroke:0.1px #385b8c;">Family Health</span>
<span style="left:401.90px;top:315.00px;font-size:8.1px;color:#000;font-weight:normal;transform:scaleX(0.9177);transform-origin:right 0;">0</span>
<span style="left:453.70px;top:315.00px;font-size:8.1px;color:#000;font-weight:normal;transform:scaleX(0.9177);transform-origin:right 0;">0</span>
<span style="left:505.50px;top:315.00px;font-size:8.1px;color:#000;font-weight:normal;transform:scaleX(0.9177);transform-origin:right 0;">0</span>
<span style="left:557.30px;top:315.00px;font-size:8.1px;color:#000;font-weight:normal;transform:scaleX(0.9177);transform-origin:right 0;">0</span>
<span style="left:609.10px;top:315.00px;font-size:8.1px;color:#000;font-weight:normal;transform:scaleX(0.9177);transform-origin:right 0;">0</span>
<span style="left:660.90px;top:315.00px;font-size:8.1px;color:#000;font-weight:normal;transform:scaleX(0.9177);transform-origin:right 0;">0</span>
<span style="left:712.70px;top:315.00px;font-size:8.1px;color:#000;font-weight:normal;transform:scaleX(0.9177);transform-origin:right 0;">0</span>
<span style="left:764.30px;top:315.00px;font-size:8.1px;color:#000;font-weight:normal;transform:scaleX(0.9177);transform-origin:right 0;">0</span>
<span style="left:137.40px;top:326.00px;font-size:8.1px;color:#000;font-weight:normal;transform:scaleX(0.9418);transform-origin:left 0;">Maternal, Newborn, &amp; Child</span>
<span style="left:266.79px;top:326.00px;font-size:8.1px;color:#000;font-weight:normal;transform:scaleX(0.9160);transform-origin:right 0;">6,867,905</span>
<span style="left:318.39px;top:326.00px;font-size:8.1px;color:#000;font-weight:normal;transform:scaleX(0.9160);transform-origin:right 0;">7,746,496</span>
<span style="left:137.40px;top:337.00px;font-size:8.1px;color:#000;font-weight:normal;transform:scaleX(0.9067);transform-origin:left 0;">Familiy Planning</span>
<span style="left:273.54px;top:337.00px;font-size:8.1px;color:#000;font-weight:normal;transform:scaleX(0.9166);transform-origin:right 0;">931,836</span>
<span style="left:325.14px;top:337.00px;font-size:8.1px;color:#000;font-weight:normal;transform:scaleX(0.9166);transform-origin:right 0;">993,181</span>
<span style="left:137.40px;top:348.00px;font-size:8.1px;color:#000;font-weight:normal;transform:scaleX(1.0009);transform-origin:left 0;">Nutrition</span>
<span style="left:266.79px;top:348.00px;font-size:8.1px;color:#000;font-weight:normal;transform:scaleX(0.9160);transform-origin:right 0;">6,867,905</span>
<span style="left:318.39px;top:348.00px;font-size:8.1px;color:#000;font-weight:normal;transform:scaleX(0.9160);transform-origin:right 0;">7,746,496</span>
<span style="left:130.30px;top:359.00px;font-size:8.1px;color:#385b8c;font-weight:bold;transform:scaleX(0.8521);transform-origin:left 0;-webkit-text-stroke:0.1px #385b8c;">Policy &amp; Advocacy</span>
<span style="left:267.39px;top:359.00px;font-size:8.1px;color:#000;font-weight:normal;transform:scaleX(0.9315);transform-origin:right 0;">1,110,576</span>
<span style="left:318.39px;top:359.00px;font-size:8.1px;color:#000;font-weight:normal;transform:scaleX(0.9160);transform-origin:right 0;">1,180,844</span>
<span style="left:130.30px;top:370.00px;font-size:8.1px;color:#385b8c;font-weight:bold;transform:scaleX(0.8435);transform-origin:left 0;-webkit-text-stroke:0.1px #385b8c;">Discovery Cross-Cutting</span>
<span style="left:266.79px;top:370.00px;font-size:8.1px;color:#000;font-weight:normal;transform:scaleX(0.9160);transform-origin:right 0;">4,905,710</span>
<span style="left:318.39px;top:370.00px;font-size:8.1px;color:#000;font-weight:normal;transform:scaleX(0.9160);transform-origin:right 0;">5,213,233</span>
<span style="left:95.80px;top:392.00px;font-size:8.1px;color:#000;font-weight:bold;transform:scaleX(0.8436);transform-origin:left 0;-webkit-text-stroke:0.1px #000;">UNITED STATES PROGRAM</span>
<span style="left:266.79px;top:392.00px;font-size:8.1px;color:#000;font-weight:normal;transform:scaleX(0.9160);transform-origin:right 0;">5,105,277</span>
<span style="left:318.39px;top:392.00px;font-size:8.1px;color:#000;font-weight:normal;transform:scaleX(0.9160);transform-origin:right 0;">5,431,385</span>
<span style="left:401.90px;top:392.00px;font-size:8.1px;color:#000;font-weight:normal;transform:scaleX(0.9177);transform-origin:right 0;">0</span>
<span style="left:453.70px;top:392.00px;font-size:8.1px;color:#000;font-weight:normal;transform:scaleX(0.9177);transform-origin:right 0;">0</span>
<span style="left:505.50px;top:392.00px;font-size:8.1px;color:#000;font-weight:normal;transform:scaleX(0.9177);transform-origin:right 0;">0</span>
<span style="left:557.30px;top:392.00px;font-size:8.1px;color:#000;font-weight:normal;transform:scaleX(0.9177);transform-origin:right 0;">0</span>
<span style="left:609.10px;top:392.00px;font-size:8.1px;color:#000;font-weight:normal;transform:scaleX(0.9177);transform-origin:right 0;">0</span>
<span style="left:660.90px;top:392.00px;font-size:8.1px;color:#000;font-weight:normal;transform:scaleX(0.9177);transform-origin:right 0;">0</span>
<span style="left:712.70px;top:392.00px;font-size:8.1px;color:#000;font-weight:normal;transform:scaleX(0.9177);transform-origin:right 0;">0</span>
<span style="left:764.30px;top:392.00px;font-size:8.1px;color:#000;font-weight:normal;transform:scaleX(0.9177);transform-origin:right 0;">0</span>
<span style="left:95.80px;top:414.00px;font-size:8.1px;color:#000;font-weight:bold;transform:scaleX(0.8564);transform-origin:left 0;-webkit-text-stroke:0.1px #000;">NON-PROGRAM GRANTS</span>
<span style="left:266.79px;top:414.00px;font-size:8.1px;color:#000;font-weight:normal;transform:scaleX(0.9160);transform-origin:right 0;">3,067,531</span>
<span style="left:318.39px;top:414.00px;font-size:8.1px;color:#000;font-weight:normal;transform:scaleX(0.9160);transform-origin:right 0;">3,258,026</span>
<span style="left:401.90px;top:414.00px;font-size:8.1px;color:#000;font-weight:normal;transform:scaleX(0.9177);transform-origin:right 0;">0</span>
<span style="left:453.70px;top:414.00px;font-size:8.1px;color:#000;font-weight:normal;transform:scaleX(0.9177);transform-origin:right 0;">0</span>
<span style="left:505.50px;top:414.00px;font-size:8.1px;color:#000;font-weight:normal;transform:scaleX(0.9177);transform-origin:right 0;">0</span>
<span style="left:557.30px;top:414.00px;font-size:8.1px;color:#000;font-weight:normal;transform:scaleX(0.9177);transform-origin:right 0;">0</span>
<span style="left:609.10px;top:414.00px;font-size:8.1px;color:#000;font-weight:normal;transform:scaleX(0.9177);transform-origin:right 0;">0</span>
<span style="left:660.90px;top:414.00px;font-size:8.1px;color:#000;font-weight:normal;transform:scaleX(0.9177);transform-origin:right 0;">0</span>
<span style="left:712.70px;top:414.00px;font-size:8.1px;color:#000;font-weight:normal;transform:scaleX(0.9177);transform-origin:right 0;">0</span>
<span style="left:764.30px;top:414.00px;font-size:8.1px;color:#000;font-weight:normal;transform:scaleX(0.9177);transform-origin:right 0;">0</span>
<span style="left:130.30px;top:425.00px;font-size:8.1px;color:#385b8c;font-weight:bold;transform:scaleX(0.8796);transform-origin:left 0;-webkit-text-stroke:0.1px #385b8c;">Familiy Interest Grants</span>
<span style="left:282.55px;top:425.00px;font-size:8.1px;color:#000;font-weight:normal;transform:scaleX(0.9162);transform-origin:right 0;">4,666</span>
<span style="left:340.90px;top:425.00px;font-size:8.1px;color:#000;font-weight:normal;transform:scaleX(0.9177);transform-origin:right 0;">665</span>
<span style="left:130.30px;top:436.00px;font-size:8.1px;color:#385b8c;font-weight:bold;transform:scaleX(0.8691);transform-origin:left 0;-webkit-text-stroke:0.1px #385b8c;">Charitable Sector Support</span>
<span style="left:266.79px;top:436.00px;font-size:8.1px;color:#000;font-weight:normal;transform:scaleX(0.9160);transform-origin:right 0;">3,062,865</span>
<span style="left:318.39px;top:436.00px;font-size:8.1px;color:#000;font-weight:normal;transform:scaleX(0.9160);transform-origin:right 0;">3,257,361</span>
<span style="left:95.80px;top:458.00px;font-size:8.1px;color:#000;font-weight:bold;transform:scaleX(0.8316);transform-origin:left 0;-webkit-text-stroke:0.1px #000;">TOTAL</span>
<span style="left:262.29px;top:458.00px;font-size:8.1px;color:#000;font-weight:bold;transform:scaleX(0.9183);transform-origin:right 0;-webkit-text-stroke:0.1px #000;">42,667,527</span>
<span style="left:313.89px;top:458.00px;font-size:8.1px;color:#000;font-weight:bold;transform:scaleX(0.9183);transform-origin:right 0;-webkit-text-stroke:0.1px #000;">46,247,334</span>
<span style="left:401.90px;top:458.00px;font-size:8.1px;color:#000;font-weight:bold;transform:scaleX(0.9177);transform-origin:right 0;-webkit-text-stroke:0.1px #000;">0</span>
<span style="left:453.70px;top:458.00px;font-size:8.1px;color:#000;font-weight:bold;transform:scaleX(0.9177);transform-origin:right 0;-webkit-text-stroke:0.1px #000;">0</span>
<span style="left:505.50px;top:458.00px;font-size:8.1px;color:#000;font-weight:bold;transform:scaleX(0.9177);transform-origin:right 0;-webkit-text-stroke:0.1px #000;">0</span>
<span style="left:557.30px;top:458.00px;font-size:8.1px;color:#000;font-weight:bold;transform:scaleX(0.9177);transform-origin:right 0;-webkit-text-stroke:0.1px #000;">0</span>
<span style="left:609.10px;top:458.00px;font-size:8.1px;color:#000;font-weight:bold;transform:scaleX(0.9177);transform-origin:right 0;-webkit-text-stroke:0.1px #000;">0</span>
<span style="left:660.90px;top:458.00px;font-size:8.1px;color:#000;font-weight:bold;transform:scaleX(0.9177);transform-origin:right 0;-webkit-text-stroke:0.1px #000;">0</span>
<span style="left:712.70px;top:458.00px;font-size:8.1px;color:#000;font-weight:bold;transform:scaleX(0.9177);transform-origin:right 0;-webkit-text-stroke:0.1px #000;">0</span>
<span style="left:764.30px;top:458.00px;font-size:8.1px;color:#000;font-weight:bold;transform:scaleX(0.9177);transform-origin:right 0;-webkit-text-stroke:0.1px #000;">0</span>
<span style="left:95.80px;top:148.00px;font-size:8.1px;color:#fff;font-weight:bold;transform:scaleX(0.8713);transform-origin:left 0;-webkit-text-stroke:0.1px #fff;">Program</span>
<span style="left:130.10px;top:148.00px;font-size:8.1px;color:#fff;font-weight:bold;transform:scaleX(0.9228);transform-origin:left 0;-webkit-text-stroke:0.1px #fff;">Initiative</span>
<span style="left:267.73px;top:136.00px;font-size:8.1px;color:#fff;font-weight:bold;transform:scaleX(0.8710);transform-origin:center 0;-webkit-text-stroke:0.1px #fff;">Actual</span>
<span style="left:271.10px;top:148.00px;font-size:8.1px;color:#fff;font-weight:bold;transform:scaleX(0.9177);transform-origin:center 0;-webkit-text-stroke:0.1px #fff;">2021</span>
<span style="left:312.45px;top:136.00px;font-size:8.1px;color:#fff;font-weight:bold;transform:scaleX(0.8278);transform-origin:center 0;-webkit-text-stroke:0.1px #fff;">Act + Fcst</span>
<span style="left:322.90px;top:148.00px;font-size:8.1px;color:#fff;font-weight:bold;transform:scaleX(0.9177);transform-origin:center 0;-webkit-text-stroke:0.1px #fff;">2022</span>
<span style="left:367.51px;top:136.00px;font-size:8.1px;color:#fff;font-weight:bold;transform:scaleX(0.8740);transform-origin:center 0;-webkit-text-stroke:0.1px #fff;">Strategy</span>
<span style="left:374.70px;top:148.00px;font-size:8.1px;color:#fff;font-weight:bold;transform:scaleX(0.9177);transform-origin:center 0;-webkit-text-stroke:0.1px #fff;">2023</span>
<span style="left:419.31px;top:136.00px;font-size:8.1px;color:#fff;font-weight:bold;transform:scaleX(0.8740);transform-origin:center 0;-webkit-text-stroke:0.1px #fff;">Strategy</span>
<span style="left:426.50px;top:148.00px;font-size:8.1px;color:#fff;font-weight:bold;transform:scaleX(0.9177);transform-origin:center 0;-webkit-text-stroke:0.1px #fff;">2024</span>
<span style="left:471.11px;top:136.00px;font-size:8.1px;color:#fff;font-weight:bold;transform:scaleX(0.8740);transform-origin:center 0;-webkit-text-stroke:0.1px #fff;">Strategy</span>
<span style="left:478.30px;top:148.00px;font-size:8.1px;color:#fff;font-weight:bold;transform:scaleX(0.9177);transform-origin:center 0;-webkit-text-stroke:0.1px #fff;">2025</span>
<span style="left:522.91px;top:136.00px;font-size:8.1px;color:#fff;font-weight:bold;transform:scaleX(0.8740);transform-origin:center 0;-webkit-text-stroke:0.1px #fff;">Strategy</span>
<span style="left:530.10px;top:148.00px;font-size:8.1px;color:#fff;font-weight:bold;transform:scaleX(0.9177);transform-origin:center 0;-webkit-text-stroke:0.1px #fff;">2026</span>
<span style="left:574.71px;top:136.00px;font-size:8.1px;color:#fff;font-weight:bold;transform:scaleX(0.8740);transform-origin:center 0;-webkit-text-stroke:0.1px #fff;">Strategy</span>
<span style="left:581.90px;top:148.00px;font-size:8.1px;color:#fff;font-weight:bold;transform:scaleX(0.9177);transform-origin:center 0;-webkit-text-stroke:0.1px #fff;">2027</span>
<span style="left:626.51px;top:136.00px;font-size:8.1px;color:#fff;font-weight:bold;transform:scaleX(0.8740);transform-origin:center 0;-webkit-text-stroke:0.1px #fff;">Strategy</span>
<span style="left:633.70px;top:148.00px;font-size:8.1px;color:#fff;font-weight:bold;transform:scaleX(0.9177);transform-origin:center 0;-webkit-text-stroke:0.1px #fff;">2028</span>
<span style="left:678.31px;top:136.00px;font-size:8.1px;color:#fff;font-weight:bold;transform:scaleX(0.8740);transform-origin:center 0;-webkit-text-stroke:0.1px #fff;">Strategy</span>
<span style="left:685.50px;top:148.00px;font-size:8.1px;color:#fff;font-weight:bold;transform:scaleX(0.9177);transform-origin:center 0;-webkit-text-stroke:0.1px #fff;">2029</span>
<span style="left:730.01px;top:136.00px;font-size:8.1px;color:#fff;font-weight:bold;transform:scaleX(0.8740);transform-origin:center 0;-webkit-text-stroke:0.1px #fff;">Strategy</span>
<span style="left:737.20px;top:148.00px;font-size:8.1px;color:#fff;font-weight:bold;transform:scaleX(0.9177);transform-origin:center 0;-webkit-text-stroke:0.1px #fff;">2030</span>
<span style="left:96.00px;top:113.00px;font-size:10.3px;color:#2d788d;font-weight:bold;transform:scaleX(0.9773);transform-origin:left 0;-webkit-text-stroke:0.15px #2d788d;">Long Term Strategic Planning - Funding</span>
<span style="left:103.90px;top:479.00px;font-size:7.0px;color:#444;font-weight:normal;transform:scaleX(0.9648);transform-origin:left 0;">35,000,000</span>
<span style="left:131.40px;top:495.00px;font-size:8px;color:#217346;font-weight:bold;transform:scaleX(0.8863);transform-origin:left 0;">PL Variance</span>
<span style="left:433.80px;top:511.00px;font-size:9px;color:#6b727c;font-weight:normal;transform:scaleX(0.9652);transform-origin:left 0;">Spreading and Line item details</span>
<span style="left:59.00px;top:7.00px;font-size:10.6px;color:#959595;font-weight:normal;transform:scaleX(0.8886);transform-origin:left 0;">Budgeting</span>
<span style="left:119.40px;top:7.00px;font-size:10.6px;color:#959595;font-weight:normal;transform:scaleX(0.8602);transform-origin:left 0;">NFP30 - Strategy Input</span>
<span style="left:695.50px;top:7.00px;font-size:8.6px;color:#7a7a7a;font-weight:normal;transform:scaleX(0.8481);transform-origin:left 0;">Notifications</span>
<span style="left:766.90px;top:7.00px;font-size:8.6px;color:#7a7a7a;font-weight:normal;transform:scaleX(0.7764);transform-origin:left 0;">Feedback</span>
<span style="left:819.90px;top:7.00px;font-size:8.6px;color:#7a7a7a;font-weight:normal;transform:scaleX(0.7978);transform-origin:left 0;">Help</span>
<span style="left:878.00px;top:3.00px;font-size:8.4px;color:#6f6f6f;font-weight:normal;transform:scaleX(0.9752);transform-origin:left 0;">Nils Rasmussen</span>
<span style="left:878.00px;top:14.00px;font-size:5.4px;color:#c0c0c0;font-weight:normal;transform:scaleX(1.0071);transform-origin:left 0;">11. NFP Demo</span>
<span style="left:83.20px;top:40.00px;font-size:8.6px;color:#2a2a2a;font-weight:normal;transform:scaleX(0.8228);transform-origin:left 0;-webkit-text-stroke:0.22px #2a2a2a;">Data Warehouse</span>
<span style="left:69.00px;top:75.00px;font-size:9.2px;color:#6a6a6a;font-weight:normal;transform:scaleX(0.9478);transform-origin:left 0;">Report parameters</span>
<span style="left:753.20px;top:43.00px;font-size:7.0px;color:#6a6a6a;font-weight:normal;transform:scaleX(0.7401);transform-origin:left 0;-webkit-text-stroke:0.18px #6a6a6a;">EDIT</span>
<span style="left:772.90px;top:43.00px;font-size:7.0px;color:#6a6a6a;font-weight:normal;transform:scaleX(0.7712);transform-origin:left 0;-webkit-text-stroke:0.18px #6a6a6a;">PUBLISH</span>
<span style="left:803.40px;top:43.00px;font-size:7.0px;color:#6a6a6a;font-weight:normal;transform:scaleX(0.7345);transform-origin:left 0;-webkit-text-stroke:0.18px #6a6a6a;">DELETE</span>
<span style="left:830.70px;top:43.00px;font-size:7.0px;color:#6a6a6a;font-weight:normal;transform:scaleX(0.7620);transform-origin:left 0;-webkit-text-stroke:0.18px #6a6a6a;">EXPORT TO EXCEL</span>
<span style="left:887.90px;top:43.00px;font-size:7.0px;color:#6a6a6a;font-weight:normal;transform:scaleX(0.7453);transform-origin:left 0;-webkit-text-stroke:0.18px #6a6a6a;">HISTORY</span>
<span style="left:918.40px;top:43.00px;font-size:7.0px;color:#6a6a6a;font-weight:normal;transform:scaleX(0.7416);transform-origin:left 0;-webkit-text-stroke:0.18px #6a6a6a;">CLOSE</span>
<span style="left:735.10px;top:115.00px;font-size:12.2px;color:#333;font-weight:normal;transform:scaleX(1.0022);transform-origin:left 0;-webkit-text-stroke:0.2px #333;">so</span>
<span style="left:751.40px;top:115.00px;font-size:12.2px;color:#333;font-weight:normal;transform:scaleX(1.0041);transform-origin:left 0;-webkit-text-stroke:0.2px #333;">ver</span>
<svg style="position:absolute;left:0;top:0" width="950" height="535" viewBox="0 0 950 535"><polygon points="7.5,15.8 20.2,10.4 17.6,17.8" fill="#1f72b8"/><polygon points="20.2,10.4 26.6,17.8 17.6,17.8" fill="#8cc63e"/><polyline points="9.9,45.0 16.9,38.0 23.9,45.0" fill="none" stroke="#5a8ed0" stroke-width="1.4"/><polygon points="11.9,44.2 16.9,39.4 21.9,44.2 21.9,51.6 11.9,51.6" fill="#fff"/><rect x="13.2" y="46.2" width="2.8" height="1.5" fill="#2e3640"/><rect x="17.4" y="46.2" width="2.2" height="5.4" fill="#2e3640"/><g transform="rotate(0 13.5 81.4)"><rect x="9.9" y="68.8" width="3.6" height="12.6" rx="0.4" fill="#fff"/><rect x="10.5" y="70.0" width="2.4" height="5.6" fill="#34506f"/><rect x="10.5" y="73.4" width="2.4" height="2.2" fill="#4f79a6"/><rect x="10.9" y="77.6" width="1.6" height="1.6" fill="#3a4450"/></g><g transform="rotate(0 17.6 81.4)"><rect x="14.0" y="68.8" width="3.6" height="12.6" rx="0.4" fill="#fff"/><rect x="14.6" y="70.0" width="2.4" height="5.6" fill="#34506f"/><rect x="14.6" y="73.4" width="2.4" height="2.2" fill="#4f79a6"/><rect x="15.0" y="77.6" width="1.6" height="1.6" fill="#3a4450"/></g><g transform="rotate(-13 24.0 81.4)"><rect x="20.4" y="68.8" width="3.6" height="12.6" rx="0.4" fill="#fff"/><rect x="21.0" y="70.0" width="2.4" height="5.6" fill="#34506f"/><rect x="21.0" y="73.4" width="2.4" height="2.2" fill="#4f79a6"/><rect x="21.4" y="77.6" width="1.6" height="1.6" fill="#3a4450"/></g><rect x="12.3" y="97.6" width="9.0" height="13.8" rx="1" fill="none" stroke="#fff" stroke-width="1.1"/><rect x="14.6" y="96.2" width="4.4" height="2.4" rx="0.6" fill="#2e3640" stroke="#fff" stroke-width="0.9"/><polyline points="14.3,101.9 16.0,103.4 19.2,100.4" fill="none" stroke="#5a8ed0" stroke-width="1.1"/><polyline points="14.3,105.8 16.0,107.3 19.2,104.3" fill="none" stroke="#5a8ed0" stroke-width="1.1"/><rect x="11.2" y="127.7" width="11.4" height="13.6" fill="none" stroke="#fff" stroke-width="1.1"/><rect x="12.4" y="129.6" width="9.0" height="1.4" fill="#fff"/><polygon points="14.4,132.6 14.4,139.2 19.6,135.9" fill="#4a90d9"/><rect x="11.8" y="157.6" width="10.1" height="14.5" rx="1" fill="#fff"/><rect x="13.0" y="158.8" width="7.7" height="2.6" fill="#5a8ed0"/><rect x="13.30" y="163.30" width="1.5" height="1.5" fill="#3a4450"/><rect x="15.90" y="163.30" width="1.5" height="1.5" fill="#3a4450"/><rect x="18.50" y="163.30" width="1.5" height="1.5" fill="#3a4450"/><rect x="13.30" y="165.90" width="1.5" height="1.5" fill="#3a4450"/><rect x="15.90" y="165.90" width="1.5" height="1.5" fill="#3a4450"/><rect x="18.50" y="165.90" width="1.5" height="1.5" fill="#3a4450"/><rect x="13.30" y="168.50" width="1.5" height="1.5" fill="#3a4450"/><rect x="15.90" y="168.50" width="1.5" height="1.5" fill="#3a4450"/><rect x="18.50" y="168.50" width="1.5" height="1.5" fill="#3a4450"/><circle cx="16.6" cy="194.8" r="6.1" fill="none" stroke="#3d6a99" stroke-width="1.1"/><rect x="9.2" y="190.4" width="6.9" height="8.6" fill="#2f3741"/><path d="M10.2 191.3 h3.4 l1.7 1.7 v5.0 h-5.1 z" fill="none" stroke="#fff" stroke-width="1.0"/><rect x="11.5" y="192.4" width="0.9" height="4.6" fill="#111"/><rect x="18.0" y="190.6" width="6.6" height="8.4" fill="#2f3741"/><circle cx="21.4" cy="193.2" r="1.7" fill="#fff"/><path d="M18.9 198.0 q0 -2.7 2.5 -2.7 q2.5 0 2.5 2.7 z" fill="#fff"/><rect x="14.4" y="218.50" width="4.8" height="3.6" rx="1" fill="#2a313a" stroke="#eee" stroke-width="1.2"/><rect x="14.4" y="223.10" width="4.8" height="3.6" rx="1" fill="#2a313a" stroke="#eee" stroke-width="1.2"/><rect x="14.4" y="227.70" width="4.8" height="3.6" rx="1" fill="#2a313a" stroke="#eee" stroke-width="1.2"/><path d="M12.6 220.6 q-2.6 0.4 -2.6 1.8 q0 1.3 2.6 1.7" fill="none" stroke="#41709f" stroke-width="1.0"/><path d="M21.0 226.0 q2.6 0.4 2.6 1.8 q0 1.3 -2.6 1.7" fill="none" stroke="#41709f" stroke-width="1.0"/><line x1="15.6" y1="255.0" x2="11.4" y2="259.4" stroke="#4a86c8" stroke-width="2.5" stroke-linecap="round"/><line x1="15.4" y1="255.2" x2="19.6" y2="251.0" stroke="#fff" stroke-width="1.6"/><polygon points="17.4,250.8 19.3,248.9 24.1,253.1 22.2,255.0" fill="#fff"/><line x1="13.6" y1="252.6" x2="22.4" y2="260.4" stroke="#fff" stroke-width="2.5" stroke-linecap="round"/><circle cx="12.4" cy="251.0" r="3.3" fill="#fff"/><polygon points="9.2,249.6 11.6,247.2 13.2,249.6 11.6,251.2" fill="#2f3741"/><circle cx="21.4" cy="259.4" r="0.7" fill="#2f3741"/><polygon points="23.63,283.27 23.63,286.33 21.68,286.86 21.71,286.79 22.71,288.55 20.55,290.71 18.79,289.71 18.86,289.68 18.33,291.63 15.27,291.63 14.74,289.68 14.81,289.71 13.05,290.71 10.89,288.55 11.89,286.79 11.92,286.86 9.97,286.33 9.97,283.27 11.92,282.74 11.89,282.81 10.89,281.05 13.05,278.89 14.81,279.89 14.74,279.92 15.27,277.97 18.33,277.97 18.86,279.92 18.79,279.89 20.55,278.89 22.71,281.05 21.71,282.81 21.68,282.74" fill="#fff"/><circle cx="16.8" cy="284.8" r="2.3" fill="#2e3640"/><rect x="40.6" y="8.35" width="5.4" height="1.1" fill="#555"/><rect x="40.6" y="10.649999999999999" width="5.4" height="1.1" fill="#555"/><rect x="40.6" y="12.95" width="5.4" height="1.1" fill="#555"/><polyline points="108.5,9.4 112.2,11.9 108.5,14.4" fill="none" stroke="#3d7cc9" stroke-width="1.1"/><path d="M688.4 6.8 a0.8 0.8 0 0 1 0.8 0.8 c2 0.5 2.4 2.2 2.4 4.2 l0.9 1.6 h-8.2 l0.9 -1.6 c0 -2 0.4 -3.7 2.4 -4.2 a0.8 0.8 0 0 1 0.8 -0.8z" fill="#333"/><circle cx="688.4" cy="14.3" r="1.0" fill="#333"/><polyline points="738.6,11.6 740.4,13.3 742.2,11.6" fill="none" stroke="#999" stroke-width="0.8"/><circle cx="759.2" cy="10.6" r="4.3" fill="none" stroke="#444" stroke-width="1.0"/><circle cx="757.7" cy="9.4" r="0.6" fill="#444"/><circle cx="760.7" cy="9.4" r="0.6" fill="#444"/><path d="M757.1 11.5 q2.1 2.3 4.2 0" fill="none" stroke="#444" stroke-width="0.9"/><circle cx="813.0" cy="10.6" r="4.2" fill="none" stroke="#333" stroke-width="1.1"/><path d="M811.5 9.4 a1.5 1.4 0 1 1 2.2 1.3 c-0.6 0.3 -0.7 0.6 -0.7 1.2" fill="none" stroke="#333" stroke-width="1.0"/><circle cx="813.0" cy="13.3" r="0.55" fill="#333"/><rect x="845.2" y="5.8" width="0.8" height="10.2" fill="#d6d6d6"/><defs><radialGradient id="av" cx="40%" cy="35%" r="70%"><stop offset="0" stop-color="#f0c6b3"/><stop offset="0.6" stop-color="#d49c86"/><stop offset="1" stop-color="#a8725f"/></radialGradient><clipPath id="avc"><circle cx="866" cy="10.6" r="8.9"/></clipPath></defs><g clip-path="url(#avc)"><rect x="856" y="0" width="20" height="21" fill="#aab3c0"/><ellipse cx="865.4" cy="11.8" rx="6.2" ry="8.0" fill="url(#av)"/><path d="M858.8 7.5 q1 -5.8 6.8 -5.8 q5.6 0 7.2 5.4 q-2.5 -3.2 -7 -3.0 q-4.6 0.2 -7 3.4z" fill="#5b4840"/><path d="M871.2 6 q2.6 5 0.4 12.5 l3 0 l0 -13z" fill="#4e4444"/><circle cx="863.0" cy="9.0" r="0.6" fill="#5a3a30"/><circle cx="867.6" cy="9.0" r="0.6" fill="#5a3a30"/><path d="M865.6 9.5 l-0.6 3.2 h1.4" fill="none" stroke="#a86e5c" stroke-width="0.6"/><path d="M862.8 13.8 q2.8 2.0 5.6 0" fill="none" stroke="#9a5a50" stroke-width="0.7"/></g><polyline points="941.2,10.4 943.3,12.4 945.4,10.4" fill="none" stroke="#999" stroke-width="0.8"/><rect x="70.8" y="39.6" width="4.6" height="8.0" fill="#3a3a3a"/><rect x="75.4" y="42.6" width="3.8" height="5.0" fill="#3a3a3a"/><rect x="71.6" y="40.8" width="1.0" height="0.8" fill="#888"/><rect x="73.4" y="40.8" width="1.0" height="0.8" fill="#888"/><rect x="71.6" y="42.8" width="1.0" height="0.8" fill="#888"/><rect x="73.4" y="42.8" width="1.0" height="0.8" fill="#888"/><rect x="76.6" y="45.4" width="2.4" height="2.2" fill="#3d6fa8"/><polyline points="141.5,42.8 143.2,44.5 144.9,42.8" fill="none" stroke="#222" stroke-width="1.3"/><polyline points="147.3,77.5 148.9,79.1 150.5,77.5" fill="none" stroke="#444" stroke-width="1.3"/><line x1="756.0" y1="35.8" x2="762.0" y2="30.0" stroke="#333" stroke-width="2.0"/><polygon points="755.2,36.8 755.6,34.8 757.0,36.2" fill="#333"/><path d="M780.9 29.0 h4.3 l2.6 2.6 v5.0 h-6.9 z" fill="#fff" stroke="#333" stroke-width="1.1"/><circle cx="781.3" cy="29.4" r="0.9" fill="#222"/><rect x="810.4" y="29.6" width="6.3" height="1.3" fill="#333"/><rect x="812.3" y="28.9" width="2.5" height="0.9" fill="#333"/><path d="M810.9 31.3 h5.3 l-0.5 5.8 h-4.3z" fill="#333"/><rect x="812.2" y="32.0" width="0.6" height="4.2" fill="#aaa"/><rect x="814.3" y="32.0" width="0.6" height="4.2" fill="#aaa"/><rect x="852.0" y="28.7" width="7.5" height="8.4" rx="0.8" fill="#9a9a9a" stroke="#333" stroke-width="0.9"/><rect x="852.9" y="29.9" width="5.7" height="1.2" fill="#eee"/><rect x="853.5" y="32.3" width="2.6" height="2.6" fill="#222"/><path d="M896.6 33.0 a3.6 3.6 0 1 0 1.0 -2.6" fill="none" stroke="#222" stroke-width="1.3"/><polygon points="895.0,32.2 898.4,32.2 896.7,34.6" fill="#222"/><polyline points="900.2,31.0 900.2,33.2 901.8,33.2" fill="none" stroke="#222" stroke-width="0.9"/><path d="M924.6 30.2 L930.4 36.0 M930.4 30.2 L924.6 36.0" stroke="#111" stroke-width="1.9"/><polyline points="42.0,38.4 43.9,40.4 42.0,42.4" fill="none" stroke="#808080" stroke-width="1.35"/><polyline points="44.8,38.4 46.7,40.4 44.8,42.4" fill="none" stroke="#808080" stroke-width="1.35"/><path d="M38.9 117.6 q4.5 -1.2 9.0 0 l-0.2 1.0 q-2.2 1.4 -3.1 3.4 v4.0 l-2.0 -0.6 v-3.4 q-0.9 -2.0 -3.1 -3.4z" fill="#333"/><text x="0" y="0" transform="translate(48.3,109.6) rotate(-90) scale(0.975,1)" font-family="Liberation Sans" font-size="11.6" fill="#6f6f6f">Parameters</text><polygon points="748.7,114.2 760.6,109.2 757.6,115.6" fill="#1f72b8"/><polygon points="760.6,109.2 766.2,115.6 757.6,115.6" fill="#8cc63e"/><line x1="760.6" y1="109.4" x2="757.6" y2="115.6" stroke="#f4fbf0" stroke-width="0.5"/><rect x="916.5" y="94.4" width="7.0" height="7.2" fill="none" stroke="#d0d0d0" stroke-width="0.8"/><line x1="919.4" y1="98.0" x2="922.6" y2="95.2" stroke="#a8a8a8" stroke-width="1.3"/><rect x="916.6" y="98.6" width="2.6" height="2.8" fill="none" stroke="#c8c8c8" stroke-width="0.6"/><rect x="928.2" y="94.2" width="7.8" height="7.6" fill="none" stroke="#d4d4d4" stroke-width="0.7"/><line x1="928.2" y1="96.2" x2="936" y2="96.2" stroke="#d8d8d8" stroke-width="0.5"/><line x1="931.0" y1="94.2" x2="931.0" y2="101.8" stroke="#d8d8d8" stroke-width="0.5"/><line x1="928.2" y1="98.1" x2="936" y2="98.1" stroke="#d8d8d8" stroke-width="0.5"/><line x1="932.7" y1="94.2" x2="932.7" y2="101.8" stroke="#d8d8d8" stroke-width="0.5"/><line x1="928.2" y1="100.0" x2="936" y2="100.0" stroke="#d8d8d8" stroke-width="0.5"/><line x1="934.4" y1="94.2" x2="934.4" y2="101.8" stroke="#d8d8d8" stroke-width="0.5"/><rect x="928.0" y="96.0" width="1.0" height="6.0" fill="#999"/><rect x="930.0" y="94.0" width="6.0" height="1.0" fill="#aaa"/><rect x="928.0" y="94.0" width="1.0" height="1.0" fill="#999"/><polygon points="929.3,112.6 931.2,110.5 933.1,112.6" fill="#444"/><rect x="927.5" y="480.5" width="7.4" height="7.6" fill="#fff" stroke="#bdbdbd" stroke-width="0.6"/><polygon points="929.3,483.3 933.1,483.3 931.2,485.4" fill="#444"/><rect x="74.7" y="171.0" width="0.9" height="32.599999999999994" fill="#8c8c8c"/><rect x="74.7" y="171.0" width="2.8" height="0.9" fill="#8c8c8c"/><rect x="84.4" y="174.60" width="0.9" height="0.9" fill="#9a9a9a"/><rect x="84.4" y="185.60" width="0.9" height="0.9" fill="#9a9a9a"/><rect x="84.4" y="196.60" width="0.9" height="0.9" fill="#9a9a9a"/><rect x="70.4" y="203.6" width="9.2" height="9.4" fill="#efefef" stroke="#a8a8a8" stroke-width="0.8"/><rect x="72.6" y="207.90" width="4.8" height="0.9" fill="#333"/><rect x="74.7" y="225.4" width="0.9" height="154.1" fill="#8c8c8c"/><rect x="74.7" y="225.4" width="2.8" height="0.9" fill="#8c8c8c"/><rect x="84.4" y="229.60" width="0.9" height="0.9" fill="#9a9a9a"/><rect x="84.4" y="240.60" width="0.9" height="0.9" fill="#9a9a9a"/><rect x="84.4" y="251.60" width="0.9" height="0.9" fill="#9a9a9a"/><rect x="84.4" y="262.60" width="0.9" height="0.9" fill="#9a9a9a"/><rect x="84.4" y="273.60" width="0.9" height="0.9" fill="#9a9a9a"/><rect x="84.4" y="284.60" width="0.9" height="0.9" fill="#9a9a9a"/><rect x="84.4" y="295.60" width="0.9" height="0.9" fill="#9a9a9a"/><rect x="84.4" y="306.60" width="0.9" height="0.9" fill="#9a9a9a"/><rect x="84.4" y="317.60" width="0.9" height="0.9" fill="#9a9a9a"/><rect x="84.4" y="328.60" width="0.9" height="0.9" fill="#9a9a9a"/><rect x="84.4" y="339.60" width="0.9" height="0.9" fill="#9a9a9a"/><rect x="84.4" y="350.60" width="0.9" height="0.9" fill="#9a9a9a"/><rect x="84.4" y="361.60" width="0.9" height="0.9" fill="#9a9a9a"/><rect x="84.4" y="372.60" width="0.9" height="0.9" fill="#9a9a9a"/><rect x="70.4" y="379.5" width="9.2" height="9.4" fill="#efefef" stroke="#a8a8a8" stroke-width="0.8"/><rect x="72.6" y="383.80" width="4.8" height="0.9" fill="#333"/><rect x="70.4" y="401.2" width="9.2" height="9.4" fill="#efefef" stroke="#a8a8a8" stroke-width="0.8"/><rect x="72.6" y="405.50" width="4.8" height="0.9" fill="#333"/><rect x="74.55" y="403.60" width="0.9" height="4.8" fill="#333"/><rect x="74.7" y="423.6" width="0.9" height="20.599999999999966" fill="#8c8c8c"/><rect x="74.7" y="423.6" width="2.8" height="0.9" fill="#8c8c8c"/><rect x="84.4" y="427.60" width="0.9" height="0.9" fill="#9a9a9a"/><rect x="84.4" y="438.60" width="0.9" height="0.9" fill="#9a9a9a"/><rect x="70.4" y="444.2" width="9.2" height="9.4" fill="#efefef" stroke="#a8a8a8" stroke-width="0.8"/><rect x="72.6" y="448.50" width="4.8" height="0.9" fill="#333"/><polyline points="85.6,495.6 84.0,497.6 85.6,499.6" fill="none" stroke="#bbb" stroke-width="0.8"/><polyline points="99.6,495.6 101.2,497.6 99.6,499.6" fill="none" stroke="#bbb" stroke-width="0.8"/><rect x="574.0" y="495.0" width="0.8" height="0.9" fill="#aaa"/><rect x="574.0" y="497.4" width="0.8" height="0.9" fill="#aaa"/><rect x="574.0" y="499.8" width="0.8" height="0.9" fill="#aaa"/><polygon points="587.6,496.4 587.6,500.6 585.4,498.5" fill="#333"/><polygon points="919.2,496.6 919.2,500.8 921.4,498.7" fill="#333"/><polyline points="561.8,516.0 564.8,513.0 567.8,516.0" fill="none" stroke="#8a919b" stroke-width="1.3"/></svg>
</body></html>
